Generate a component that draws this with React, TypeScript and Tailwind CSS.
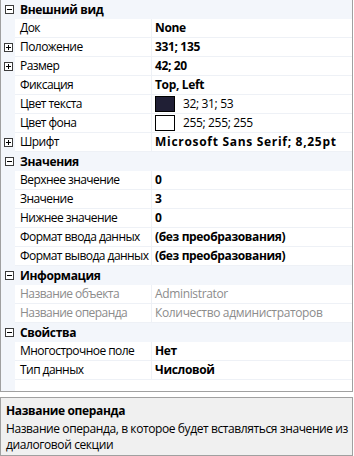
import React from "react";

type Row =
  | { kind: "group"; title: string }
  | {
      kind: "prop";
      label: string;
      value: string;
      expand?: boolean;
      bold?: boolean;
      disabled?: boolean;
      swatch?: string;
      wide?: boolean;
    };

const rows: Row[] = [
  { kind: "group", title: "Внешний вид" },
  { kind: "prop", label: "Док", value: "None", bold: true },
  { kind: "prop", label: "Положение", value: "331; 135", expand: true, bold: true },
  { kind: "prop", label: "Размер", value: "42; 20", expand: true, bold: true },
  { kind: "prop", label: "Фиксация", value: "Top, Left", bold: true },
  { kind: "prop", label: "Цвет текста", value: "32; 31; 53", swatch: "bg-[#201f35]" },
  { kind: "prop", label: "Цвет фона", value: "255; 255; 255", swatch: "bg-white" },
  { kind: "prop", label: "Шрифт", value: "Microsoft Sans Serif; 8,25pt", expand: true, bold: true, wide: true },
  { kind: "group", title: "Значения" },
  { kind: "prop", label: "Верхнее значение", value: "0", bold: true },
  { kind: "prop", label: "Значение", value: "3", bold: true },
  { kind: "prop", label: "Нижнее значение", value: "0", bold: true },
  { kind: "prop", label: "Формат ввода данных", value: "(без преобразования)", bold: true },
  { kind: "prop", label: "Формат вывода данных", value: "(без преобразования)", bold: true },
  { kind: "group", title: "Информация" },
  { kind: "prop", label: "Название объекта", value: "Administrator", disabled: true },
  { kind: "prop", label: "Название операнда", value: "Количество администраторов", disabled: true },
  { kind: "group", title: "Свойства" },
  { kind: "prop", label: "Многострочное поле", value: "Нет", bold: true },
  { kind: "prop", label: "Тип данных", value: "Числовой", bold: true },
];

function Toggle({ open }: { open: boolean }) {
  return (
    <div className="relative w-[9px] h-[9px] border border-[#3c3c3c] bg-white">
      <div className="absolute left-[1px] top-[3px] w-[5px] h-px bg-black" />
      {!open && <div className="absolute left-[3px] top-[1px] w-px h-[5px] bg-black" />}
    </div>
  );
}

export default function App() {
  return (
    <div
      className="w-[354px] h-[456px] bg-white text-[12px] leading-none text-black tracking-[-0.35px]"
      style={{ fontFamily: '"Open Sans", "Noto Sans", sans-serif' }}
    >
      <div className="w-[353px] h-[392px] border border-[#a0a0a0] border-t-0 bg-[#f3f6fb] flex flex-col">
        {rows.map((r, i) =>
          r.kind === "group" ? (
            <div key={i} className="h-[19px] flex items-center bg-[#f3f6fb]">
              <div className="w-[15px] flex justify-center pl-[1px]">
                <Toggle open />
              </div>
              <div className="pl-[4px] font-bold">{r.title}</div>
            </div>
          ) : (
            <div key={i} className="h-[19px] flex">
              <div className="w-[14px] flex items-center justify-center pl-[1px]">
                {r.expand && <Toggle open={false} />}
              </div>
              <div className="flex-1 flex bg-white border-b border-[#eef1f6]">
                <div
                  className={`w-[137px] pl-[5px] flex items-center border-r border-[#eef1f6] whitespace-nowrap overflow-hidden tracking-[-0.55px] ${
                    r.disabled ? "text-[#8c8c8c]" : ""
                  }`}
                >
                  {r.label}
                </div>
                <div
                  className={`flex-1 pl-[3px] flex items-center whitespace-nowrap overflow-hidden ${
                    r.bold ? "font-bold" : ""
                  } ${r.disabled ? "text-[#8c8c8c]" : ""} ${r.wide ? "tracking-[0.7px]" : ""}`}
                >
                  {r.swatch && (
                    <div className={`w-[20px] h-[16px] border border-black mr-[8px] ${r.swatch}`} />
                  )}
                  {r.value}
                </div>
              </div>
            </div>
          )
        )}
        <div className="flex-1 flex">
          <div className="w-[14px]" />
          <div className="flex-1 bg-white" />
        </div>
      </div>
      <div className="mt-[5px] w-[353px] h-[59px] border border-[#a0a0a0] bg-[#f0f0f0] pl-[5px] pr-[2px] pt-[5px] leading-[16px]">
        <div className="font-bold mb-[2px]">Название операнда</div>
        <div className="tracking-[-0.4px]">
          Название операнда, в которое будет вставляться значение из диалоговой секции
        </div>
      </div>
    </div>
  );
}
